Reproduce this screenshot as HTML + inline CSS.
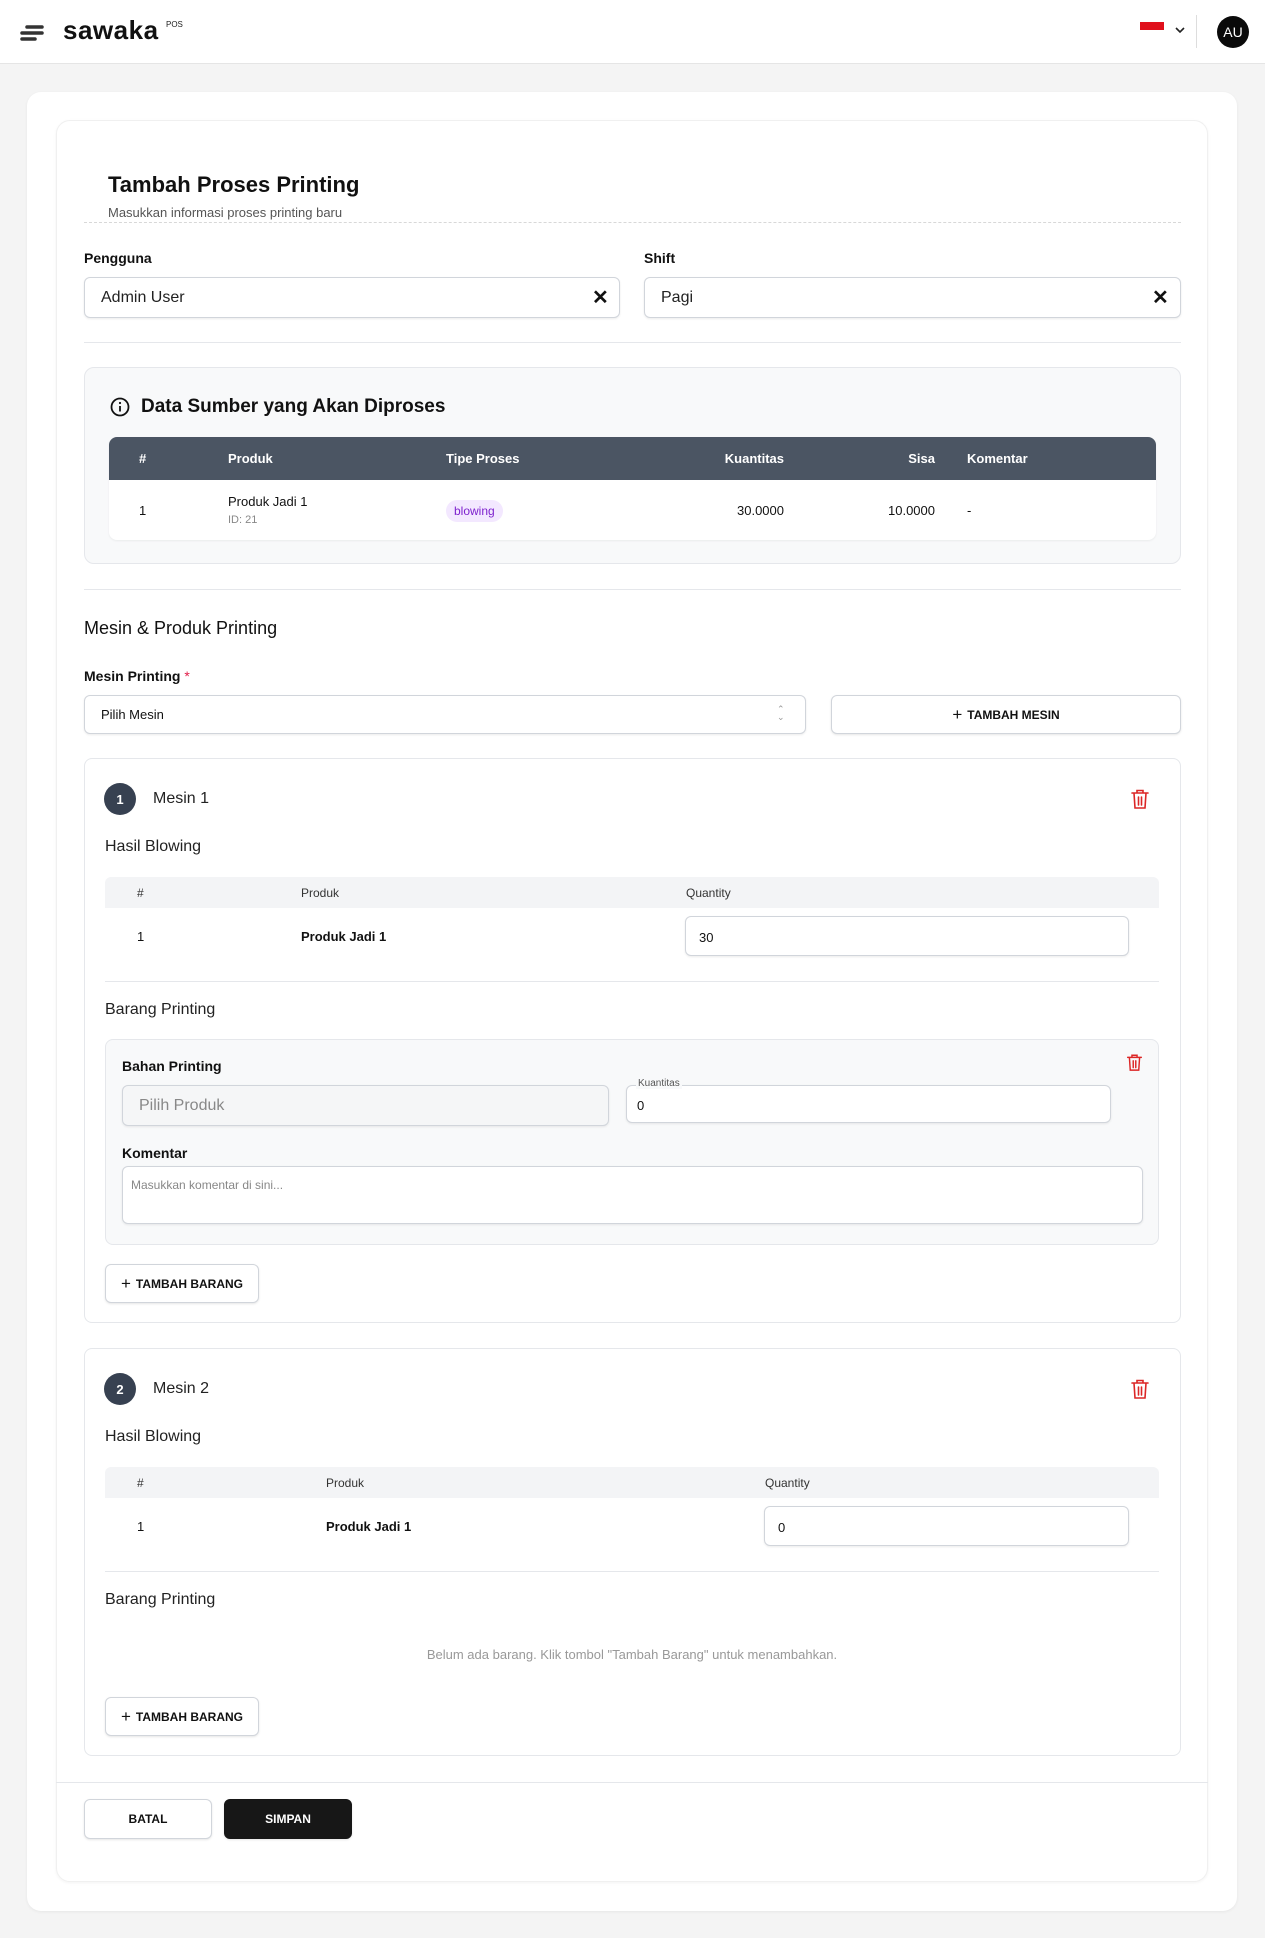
<!DOCTYPE html>
<html><head><meta charset="utf-8"><style>
*{box-sizing:border-box;margin:0;padding:0}
body{width:1265px;height:1938px;background:#f4f4f4;font-family:"Liberation Sans",sans-serif;color:#111;position:relative;overflow:hidden}
.a{position:absolute}
.hdr{left:0;top:0;width:1265px;height:64px;background:#fff;border-bottom:1px solid #e5e5e5}
.card{background:#fff;border-radius:14px}
.inp{background:#fff;border:1px solid #d1d5db;border-radius:6px;box-shadow:0 1px 2px rgba(0,0,0,.08)}
.lbl{font-size:14px;font-weight:bold;color:#111}
.sep{height:1px;background:#e5e7eb}
.h3{font-size:16px;color:#222}
.btn{background:#fff;border:1px solid #d1d5db;border-radius:6px;box-shadow:0 1px 2px rgba(0,0,0,.1);font-size:12px;font-weight:bold;display:flex;align-items:center;justify-content:center;color:#111}
.th{font-size:12px;color:#333}
.td{font-size:13px}
</style></head><body>
<div class="a hdr">
 <svg class="a" style="left:19px;top:24px" width="26" height="20" viewBox="0 0 26 20"><g stroke="#333" stroke-width="3.5" stroke-linecap="round"><line x1="8" y1="3" x2="23" y2="3"/><line x1="3" y1="9" x2="23" y2="9"/><line x1="3" y1="15" x2="16" y2="15"/></g></svg>
 <div class="a" style="left:63px;top:15px;font-size:26px;font-weight:bold;letter-spacing:0.5px;color:#111">sawaka</div>
 <div class="a" style="left:166px;top:20px;font-size:8px;color:#222">POS</div>
 <div class="a" style="left:1140px;top:22px;width:24px;height:8px;background:#e0101c"></div>
 <svg class="a" style="left:1175px;top:27px" width="10" height="7"><path d="M1 1l4 4 4-4" stroke="#222" stroke-width="1.6" fill="none"/></svg>
 <div class="a" style="left:1196px;top:15px;width:1px;height:33px;background:#ddd"></div>
 <div class="a" style="left:1217px;top:16px;width:32px;height:32px;border-radius:50%;background:#0a0a0a;color:#fff;font-size:14px;display:flex;align-items:center;justify-content:center">AU</div>
</div>

<div class="a card" style="left:27px;top:92px;width:1210px;height:1819px;box-shadow:0 1px 3px rgba(0,0,0,.06)"></div>
<div class="a card" style="left:56px;top:120px;width:1152px;height:1762px;border:1px solid #f0f0f0;box-shadow:0 1px 3px rgba(0,0,0,.05)"></div>

<div class="a" style="left:108px;top:172px;font-size:22px;font-weight:bold">Tambah Proses Printing</div>
<div class="a" style="left:108px;top:205px;font-size:13px;color:#555">Masukkan informasi proses printing baru</div>
<div class="a" style="left:84px;top:222px;width:1097px;border-top:1px dashed #d8d8d8"></div>

<div class="a lbl" style="left:84px;top:250px">Pengguna</div>
<div class="a lbl" style="left:644px;top:250px">Shift</div>
<div class="a inp" style="left:84px;top:277px;width:536px;height:41px"></div>
<div class="a" style="left:101px;top:289px;font-size:16px;color:#222">Admin User</div>
<div class="a" style="left:592px;top:285px;font-size:20px;font-weight:bold">✕</div>
<div class="a inp" style="left:644px;top:277px;width:537px;height:41px"></div>
<div class="a" style="left:661px;top:289px;font-size:16px;color:#222">Pagi</div>
<div class="a" style="left:1152px;top:285px;font-size:20px;font-weight:bold">✕</div>
<div class="a sep" style="left:84px;top:342px;width:1097px"></div>

<div class="a" style="left:84px;top:367px;width:1097px;height:197px;background:#f8f9fa;border:1px solid #e5e7eb;border-radius:10px"></div>
<svg class="a" style="left:110px;top:397px" width="20" height="20" viewBox="0 0 20 20"><circle cx="10" cy="10" r="8.5" stroke="#111" stroke-width="1.8" fill="none"/><line x1="10" y1="9" x2="10" y2="14.5" stroke="#111" stroke-width="1.8"/><circle cx="10" cy="6" r="1.1" fill="#111"/></svg>
<div class="a" style="left:141px;top:396px;font-size:19px;font-weight:bold">Data Sumber yang Akan Diproses</div>
<div class="a" style="left:109px;top:437px;width:1047px;height:103px;background:#fff;border-radius:8px;overflow:hidden;box-shadow:0 1px 2px rgba(0,0,0,.06)">
 <div style="height:43px;background:#4b5563"></div>
</div>
<div class="a" style="left:139px;top:451px;font-size:13px;font-weight:bold;color:#fff">#</div>
<div class="a" style="left:228px;top:451px;font-size:13px;font-weight:bold;color:#fff">Produk</div>
<div class="a" style="left:446px;top:451px;font-size:13px;font-weight:bold;color:#fff">Tipe Proses</div>
<div class="a" style="left:684px;width:100px;text-align:right;top:451px;font-size:13px;font-weight:bold;color:#fff">Kuantitas</div>
<div class="a" style="left:835px;width:100px;text-align:right;top:451px;font-size:13px;font-weight:bold;color:#fff">Sisa</div>
<div class="a" style="left:967px;top:451px;font-size:13px;font-weight:bold;color:#fff">Komentar</div>
<div class="a td" style="left:139px;top:503px">1</div>
<div class="a td" style="left:228px;top:494px">Produk Jadi 1</div>
<div class="a" style="left:228px;top:514px;font-size:11px;color:#888">ID: 21</div>
<div class="a" style="left:446px;top:500px;height:22px;padding:0 8px;border-radius:11px;background:#f3e8ff;color:#7e22ce;font-size:12px;line-height:22px">blowing</div>
<div class="a td" style="left:684px;width:100px;text-align:right;top:503px">30.0000</div>
<div class="a td" style="left:835px;width:100px;text-align:right;top:503px">10.0000</div>
<div class="a td" style="left:967px;top:503px">-</div>

<div class="a sep" style="left:84px;top:589px;width:1097px"></div>
<div class="a" style="left:84px;top:618px;font-size:18px;color:#111">Mesin &amp; Produk Printing</div>
<div class="a lbl" style="left:84px;top:668px">Mesin Printing <span style="color:#e11d48;font-weight:normal">*</span></div>
<div class="a inp" style="left:84px;top:695px;width:722px;height:39px"></div>
<div class="a" style="left:101px;top:707px;font-size:13px">Pilih Mesin</div>
<div class="a" style="left:777px;top:705px;font-size:9px;color:#999;line-height:8px">⌃<br>⌄</div>
<div class="a btn" style="left:831px;top:695px;width:350px;height:39px"><span style="font-size:17px;font-weight:normal;margin-right:5px">+</span>TAMBAH MESIN</div>

<!-- Mesin 1 -->
<div class="a" style="left:84px;top:758px;width:1097px;height:565px;background:#fff;border:1px solid #e5e7eb;border-radius:8px"></div>
<div class="a" style="left:104px;top:783px;width:32px;height:32px;border-radius:50%;background:#374151;color:#fff;font-size:13px;font-weight:bold;display:flex;align-items:center;justify-content:center">1</div>
<div class="a" style="left:153px;top:790px;font-size:16px;color:#222">Mesin 1</div>
<svg class="a" style="left:1130px;top:788px" width="20" height="22" viewBox="0 0 20 22"><g stroke="#dc2626" stroke-width="1.6" fill="none" stroke-linecap="round"><path d="M2 5h16M7 5V2.5h6V5M4 5l1 15h10l1-15M8.5 9v8M11.5 9v8"/></g></svg>
<div class="a h3" style="left:105px;top:838px">Hasil Blowing</div>
<div class="a" style="left:105px;top:877px;width:1054px;height:31px;background:#f3f4f6;border-radius:6px 6px 0 0"></div>
<div class="a th" style="left:137px;top:886px">#</div>
<div class="a th" style="left:301px;top:886px">Produk</div>
<div class="a th" style="left:686px;top:886px">Quantity</div>
<div class="a td" style="left:137px;top:929px">1</div>
<div class="a td" style="left:301px;top:929px;font-weight:bold">Produk Jadi 1</div>
<div class="a inp" style="left:685px;top:916px;width:444px;height:40px"></div>
<div class="a td" style="left:699px;top:930px">30</div>
<div class="a sep" style="left:105px;top:981px;width:1054px"></div>
<div class="a h3" style="left:105px;top:1001px">Barang Printing</div>
<div class="a" style="left:105px;top:1039px;width:1054px;height:206px;background:#f8f9fa;border:1px solid #e5e7eb;border-radius:8px"></div>
<div class="a lbl" style="left:122px;top:1058px">Bahan Printing</div>
<svg class="a" style="left:1126px;top:1053px" width="17" height="19" viewBox="0 0 20 22"><g stroke="#dc2626" stroke-width="1.7" fill="none" stroke-linecap="round"><path d="M2 5h16M7 5V2.5h6V5M4 5l1 15h10l1-15M8.5 9v8M11.5 9v8"/></g></svg>
<div class="a inp" style="left:122px;top:1085px;width:487px;height:41px;background:#f5f6f7"></div>
<div class="a" style="left:139px;top:1097px;font-size:16px;color:#888">Pilih Produk</div>
<div class="a inp" style="left:626px;top:1085px;width:485px;height:38px"></div>
<div class="a" style="left:636px;top:1078px;font-size:10px;color:#555;background:#f8f9fa;padding:0 2px">Kuantitas</div>
<div class="a td" style="left:637px;top:1098px">0</div>
<div class="a lbl" style="left:122px;top:1145px">Komentar</div>
<div class="a inp" style="left:122px;top:1166px;width:1021px;height:58px"></div>
<div class="a" style="left:131px;top:1178px;font-size:12px;color:#888">Masukkan komentar di sini...</div>
<div class="a btn" style="left:105px;top:1264px;width:154px;height:39px"><span style="font-size:17px;font-weight:normal;margin-right:5px">+</span>TAMBAH BARANG</div>

<!-- Mesin 2 -->
<div class="a" style="left:84px;top:1348px;width:1097px;height:408px;background:#fff;border:1px solid #e5e7eb;border-radius:8px"></div>
<div class="a" style="left:104px;top:1373px;width:32px;height:32px;border-radius:50%;background:#374151;color:#fff;font-size:13px;font-weight:bold;display:flex;align-items:center;justify-content:center">2</div>
<div class="a" style="left:153px;top:1380px;font-size:16px;color:#222">Mesin 2</div>
<svg class="a" style="left:1130px;top:1378px" width="20" height="22" viewBox="0 0 20 22"><g stroke="#dc2626" stroke-width="1.6" fill="none" stroke-linecap="round"><path d="M2 5h16M7 5V2.5h6V5M4 5l1 15h10l1-15M8.5 9v8M11.5 9v8"/></g></svg>
<div class="a h3" style="left:105px;top:1428px">Hasil Blowing</div>
<div class="a" style="left:105px;top:1467px;width:1054px;height:31px;background:#f3f4f6;border-radius:6px 6px 0 0"></div>
<div class="a th" style="left:137px;top:1476px">#</div>
<div class="a th" style="left:326px;top:1476px">Produk</div>
<div class="a th" style="left:765px;top:1476px">Quantity</div>
<div class="a td" style="left:137px;top:1519px">1</div>
<div class="a td" style="left:326px;top:1519px;font-weight:bold">Produk Jadi 1</div>
<div class="a inp" style="left:764px;top:1506px;width:365px;height:40px"></div>
<div class="a td" style="left:778px;top:1520px">0</div>
<div class="a sep" style="left:105px;top:1571px;width:1054px"></div>
<div class="a h3" style="left:105px;top:1591px">Barang Printing</div>
<div class="a" style="left:105px;top:1647px;width:1054px;text-align:center;font-size:13px;color:#999">Belum ada barang. Klik tombol "Tambah Barang" untuk menambahkan.</div>
<div class="a btn" style="left:105px;top:1697px;width:154px;height:39px"><span style="font-size:17px;font-weight:normal;margin-right:5px">+</span>TAMBAH BARANG</div>

<div class="a sep" style="left:56px;top:1782px;width:1152px"></div>
<div class="a btn" style="left:84px;top:1799px;width:128px;height:40px">BATAL</div>
<div class="a btn" style="left:224px;top:1799px;width:128px;height:40px;background:#171717;border-color:#171717;color:#fff">SIMPAN</div>
</body></html>
